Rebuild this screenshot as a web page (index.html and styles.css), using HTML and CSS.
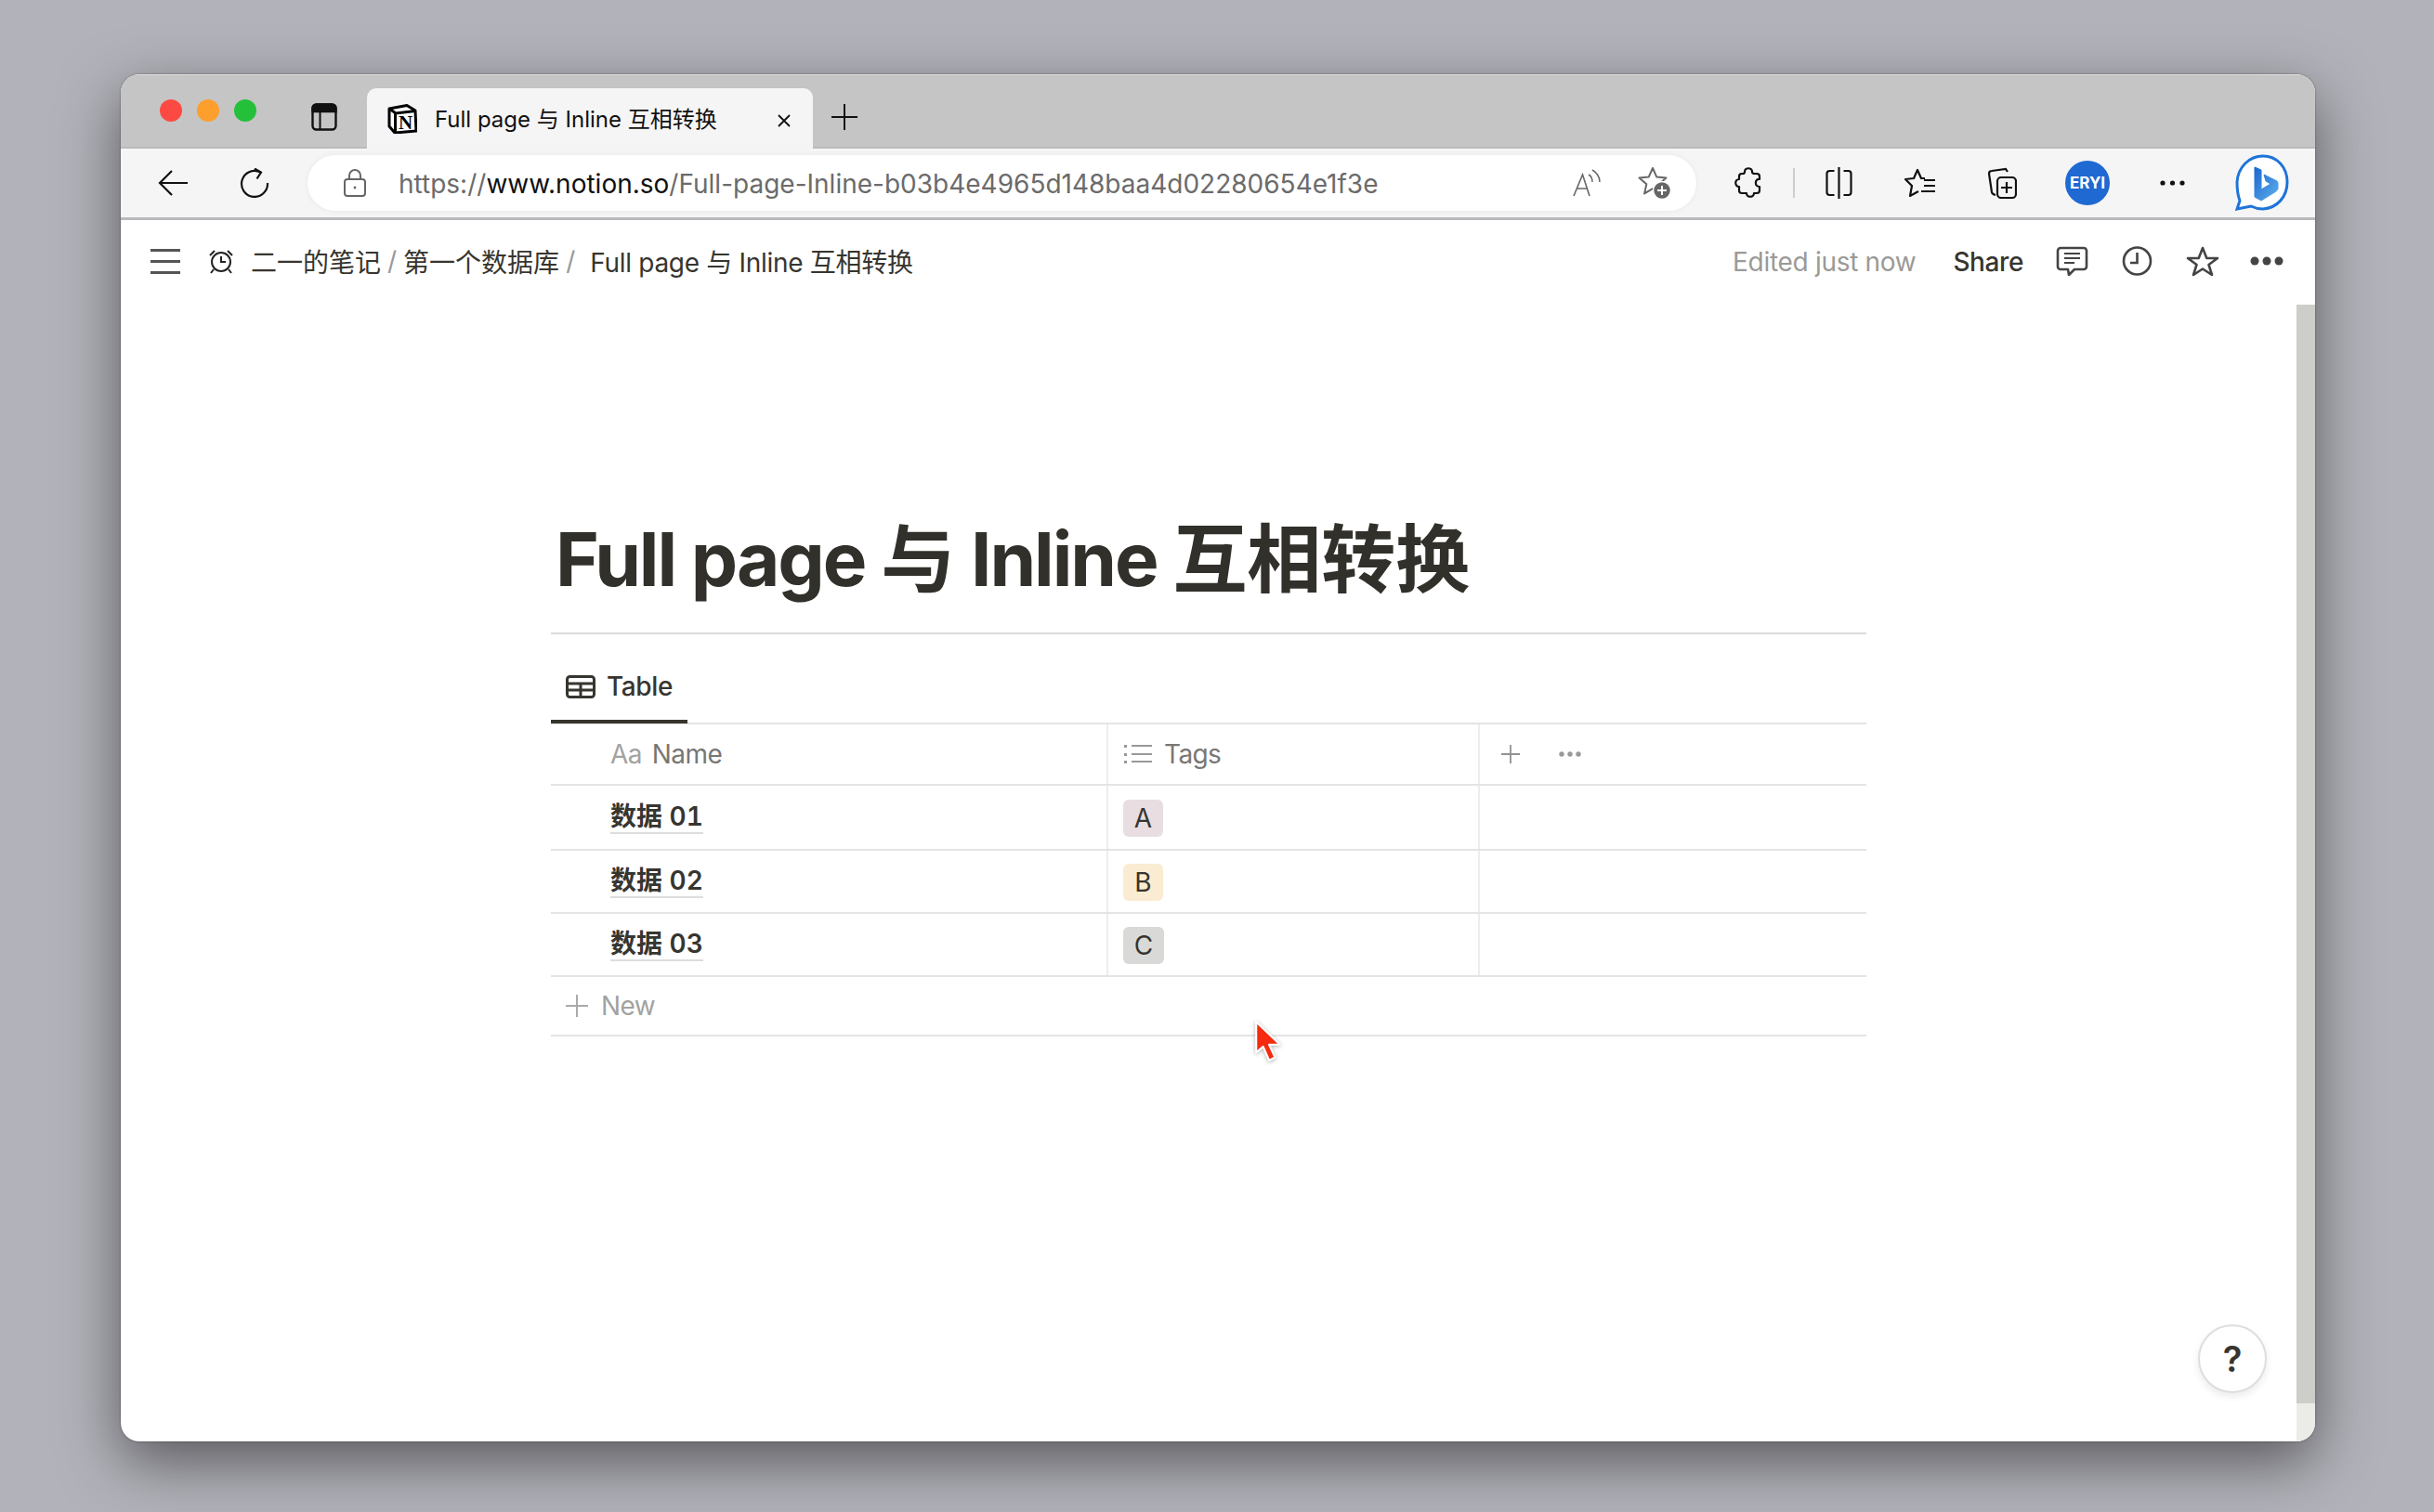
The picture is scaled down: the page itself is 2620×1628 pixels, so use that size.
FILE: index.html
```html
<!DOCTYPE html>
<html lang="zh-CN">
<head>
    <meta charset="UTF-8">
    <title>Full page 与 Inline 互相转换</title>
    <link rel="stylesheet" href="styles.css">
</head>
<body>
<div class="window">
    <!-- tab strip -->
    <div class="tabstrip">
        <div class="lights">
            <span class="light red"></span>
            <span class="light orange"></span>
            <span class="light green"></span>
        </div>
        <svg class="tabs-icon" viewBox="0 0 28 30" fill="none" stroke="#111" stroke-width="2.4">
            <rect x="1.5" y="1.5" width="25" height="27" rx="4"/>
            <path d="M1.5 9V5.5a4 4 0 0 1 4-4h17a4 4 0 0 1 4 4V9z" fill="#111"/>
            <path d="M9.5 9v19.5" stroke-width="2"/>
        </svg>
        <div class="tab">
            <svg class="notion-logo" viewBox="0 0 32 32">
                <path d="M2 5 21 1.5 30 7 31 29 8 31 2 24z" fill="#fff" stroke="#000" stroke-width="3" stroke-linejoin="round"/>
                <path d="M2 5 9 10 30 7.5M8.5 10 8.5 30" fill="none" stroke="#000" stroke-width="3"/>
                <text x="19.5" y="26.5" text-anchor="middle" class="notion-n">N</text>
            </svg>
            <span class="tab-title">Full page 与 Inline 互相转换</span>
            <svg class="tab-close" viewBox="0 0 16 16" stroke="#111" stroke-width="1.8"><path d="M2 2l12 12M14 2 2 14"/></svg>
        </div>
        <svg class="new-tab" viewBox="0 0 28 28" stroke="#111" stroke-width="2"><path d="M14 0v28M0 14h28"/></svg>
    </div>

    <!-- address bar -->
    <div class="toolbar">
        <svg class="tb-back" viewBox="0 0 32 28" fill="none" stroke="#111" stroke-width="2.2"><path d="M32 14H2M15 1 2 14l13 13"/></svg>
        <svg class="tb-reload" viewBox="0 0 32 32" fill="none" stroke="#111" stroke-width="2.2"><path d="M22.5 4.5A14 14 0 1 0 30 16"/><path d="M16 .5l7 4.2-4.5 6.800"/></svg>
        <div class="addressbar">
            <svg class="lock" viewBox="0 0 24 30" fill="none" stroke="#666" stroke-width="2"><rect x="1" y="11" width="22" height="18" rx="3"/><path d="M6 11V7a6 6 0 0 1 12 0v4"/><circle cx="12" cy="20" r="1.4" fill="#666" stroke="none"/></svg>
            <div class="url">https://<b>www.notion.so</b>/Full-page-Inline-b03b4e4965d148baa4d02280654e1f3e</div>
            <svg class="read-aloud" viewBox="0 0 31 30" fill="none" stroke="#666" stroke-width="1.6"><path d="M1 29 10.5 6 18 29M4.5 21h11"/><path d="M17 6c2 1 4 4 4 8M21 1c4 2 8 7 8 13" stroke-width="1.5"/></svg>
            <svg class="fav-add" viewBox="0 0 36 36" fill="none" stroke="#666" stroke-width="2"><path d="M16 2l4.2 9.400 10.300 1-7.800 6.900 2.200 10.100L16 24.200l-8.900 5.200 2.200-10.100-7.800-6.900 10.300-1z" stroke-linejoin="round"/><circle cx="26" cy="26" r="9.5" fill="#666" stroke="#fff" stroke-width="1.5"/><path d="M26 21v10M21 26h10" stroke="#fff" stroke-width="2"/></svg>
        </div>
        <svg class="ic-ext" viewBox="0 0 28 34" fill="none" stroke="#111" stroke-width="2.2"><path d="M10 5c0-5 8-5 8 0 0 1 1 2 3 2h2a3 3 0 0 1 3 3v3c-5-1-6 8 0 8v4a3 3 0 0 1-3 3h-3c0 5-8 5-8 0H7a3 3 0 0 1-3-3v-4c-5 0-5-8 0-8v-3a3 3 0 0 1 3-3h1c1 0 2-1 2-2z" stroke-linejoin="round"/></svg>
        <span class="tb-sep"></span>
        <svg class="ic-split" viewBox="0 0 30 34" fill="none" stroke="#111" stroke-width="2.2"><path d="M10 4H5a3 3 0 0 0-3 3v20a3 3 0 0 0 3 3h5M20 4h5a3 3 0 0 1 3 3v20a3 3 0 0 1-3 3h-5"/><path d="M15 0v34"/></svg>
        <svg class="ic-favs" viewBox="0 0 33 32" fill="none" stroke="#111" stroke-width="2.2"><path d="M22 11h-4L14 2l-4 9-9 1 7 7-2 11 9-5" stroke-linejoin="round"/><path d="M21 13h12M21 19h12M18 25h15" stroke-width="2"/></svg>
        <svg class="ic-coll" viewBox="0 0 32 34" fill="none" stroke="#111" stroke-width="2.2"><path d="M22 5 20 2 5 4a3 3 0 0 0-3 3l3 20c.3 1.5 2 2.5 4 3"/><rect x="11" y="11" width="20" height="22" rx="4"/><path d="M21 16v12M15 22h12"/></svg>
        <div class="avatar">ERYI</div>
        <svg class="ic-more" viewBox="0 0 27 6" fill="#111"><circle cx="3" cy="3" r="2.6"/><circle cx="13.5" cy="3" r="2.6"/><circle cx="24" cy="3" r="2.6"/></svg>
        <svg class="ic-bing" viewBox="0 0 60 62">
            <defs>
                <linearGradient id="bing-fill" x1="0" y1="0" x2="1" y2="1">
                    <stop offset="0" stop-color="#1c66cf"/>
                    <stop offset="1" stop-color="#5fb0ec"/>
                </linearGradient>
            </defs>
            <path d="M31 2C16 2 4 14 3 30c0 8 1 15 3 20l-3 9 15-3c4 2 8 3 13 3 15-1 26-13 26-29S46 2 31 2z" fill="#fff" stroke="#1f74d8" stroke-width="3"/>
            <path d="M22 14l7 3v21l10-6-5-3-2-7 14 7c1 1 1 2 1 3v5c0 1-1 2-2 3l-16 10-7-4z" fill="url(#bing-fill)" stroke="url(#bing-fill)" stroke-linejoin="round"/>
        </svg>
    </div>

    <div class="viewport">
        <div class="page">
            <div class="topbar">
                <svg class="ic-menu" viewBox="0 0 32 27" fill="#555"><rect width="32" height="3"/><rect y="12" width="32" height="3"/><rect y="24" width="32" height="3"/></svg>
                <svg class="ic-alarm" viewBox="0 0 28 28" fill="none" stroke="#222" stroke-width="2"><circle cx="14" cy="15" r="10"/><path d="M14 9v6h5M2 8l5-5M26 8l-5-5M6 23l-3 4M22 23l3 4"/></svg>
                <span class="crumb">二一的笔记</span>
                <span class="slash">/</span>
                <span class="crumb">第一个数据库</span>
                <span class="slash">/</span>
                <span class="crumb crumb-current">Full page 与 Inline 互相转换</span>
                <span class="edited">Edited just now</span>
                <span class="share">Share</span>
                <svg class="ic-comment" viewBox="0 0 35 32" fill="none" stroke="#444" stroke-width="2.6"><path d="M5 2h25a3 3 0 0 1 3 3v17a3 3 0 0 1-3 3H20l-6 6-1-6H5a3 3 0 0 1-3-3V5a3 3 0 0 1 3-3z" stroke-linejoin="round"/><path d="M9 8h17M9 13h17M9 18h11" stroke-width="2"/></svg>
                <svg class="ic-clock" viewBox="0 0 33 32" fill="none" stroke="#444" stroke-width="2.6"><circle cx="16.5" cy="16" r="14.5"/><path d="M16.5 7v11H9"/></svg>
                <svg class="ic-star" viewBox="0 0 36 33" fill="none" stroke="#444" stroke-width="2.6"><path d="M18 2l4.300 11H34l-9.500 7L28 31l-10-6.500L8 31l3.500-11L2 13h11.700z" stroke-linejoin="round"/></svg>
                <svg class="ic-dots" viewBox="0 0 36 10" fill="#444"><circle cx="5" cy="5" r="4.5"/><circle cx="18" cy="5" r="4.5"/><circle cx="31" cy="5" r="4.5"/></svg>
            </div>

            <div class="content">
                <h1 class="title"><span class="lat">Full page </span>与<span class="lat"> Inline </span>互相转换</h1>
                <div class="views">
                    <div class="view-tab">
                        <svg class="ic-table" viewBox="0 0 32 25" fill="none" stroke="#37352f" stroke-width="3"><rect x="1.5" y="1.5" width="29" height="22" rx="3"/><path d="M1.5 9h29M1.5 16h29M16 9v15"/></svg>
                        <span>Table</span>
                    </div>
                </div>
                <div class="row head">
                    <div class="cell cell-name"><span class="aa">Aa</span> Name</div>
                    <div class="cell cell-tags">
                        <svg class="ic-list" viewBox="0 0 30 22" fill="#999"><rect x="0" y="1" width="3" height="3"/><rect x="0" y="10" width="3" height="3"/><rect x="0" y="18" width="3" height="3"/><rect x="8" y="1" width="22" height="2"/><rect x="8" y="10" width="22" height="2"/><rect x="8" y="18" width="22" height="2"/></svg>
                        <span>Tags</span>
                    </div>
                    <div class="cell cell-extra">
                        <svg class="ic-plus" viewBox="0 0 20 20" stroke="#919191" stroke-width="1.8"><path d="M10 0v20M0 10h20"/></svg>
                        <svg class="ic-dots-small" viewBox="0 0 24 6" fill="#999"><circle cx="3" cy="3" r="2.7"/><circle cx="12" cy="3" r="2.7"/><circle cx="21" cy="3" r="2.7"/></svg>
                    </div>
                </div>
                <div class="row first">
                    <div class="cell cell-name"><span class="rowname">数据 01</span></div>
                    <div class="cell cell-tags"><span class="tag tag-a">A</span></div>
                    <div class="cell"></div>
                </div>
                <div class="row">
                    <div class="cell cell-name"><span class="rowname">数据 02</span></div>
                    <div class="cell cell-tags"><span class="tag tag-b">B</span></div>
                    <div class="cell"></div>
                </div>
                <div class="row">
                    <div class="cell cell-name"><span class="rowname">数据 03</span></div>
                    <div class="cell cell-tags"><span class="tag tag-c">C</span></div>
                    <div class="cell"></div>
                </div>
                <div class="new-row">
                    <svg class="ic-new" viewBox="0 0 24 24" stroke="#aaa" stroke-width="2"><path d="M12 0v24M0 12h24"/></svg>
                    <span>New</span>
                </div>
            </div>

            <div class="help">?</div>
        </div>
        <div class="scrollbar"><div class="scroll-top"></div><div class="scroll-thumb"></div></div>
    </div>

    <svg class="cursor" viewBox="0 0 30 44">
        <path d="M3 2 3 33 10 27 16 41 22 38 16 25 27 25z" fill="#f52a0e" stroke="#fff" stroke-width="2" stroke-linejoin="round"/>
    </svg>
</div>
</body>
</html>
```

FILE: styles.css
```css
* { box-sizing: border-box; }
body { margin: 0; width: 2620px; height: 1628px; overflow: hidden; background-color: #b2b2ba; padding: 80px 128px 76px 130px; font-family: Inter, "Noto Sans CJK SC", sans-serif; color: #37352f; }
svg { display: block; flex: none; }

.window { position: relative; width: 2362px; height: 1472px; display: flex; flex-direction: column; border-radius: 20px; overflow: hidden; background-color: #fff; }
.window { box-shadow: 0 22px 64px rgba(0, 0, 0, .5), 0 0 2px rgba(0, 0, 0, .5); }

/* tab strip */
.tabstrip { height: 80px; flex: none; display: flex; align-items: flex-end; background-color: #c5c5c5; border-top: 1px solid #e2e2e2; border-bottom: 2px solid #bbb; }
.lights { display: flex; gap: 16px; margin: 0 0 27px 42px; }
.light { width: 24px; height: 24px; border-radius: 50%; }
.red { background-color: #fc4a43; }
.orange { background-color: #fc9f2c; }
.green { background-color: #25c03a; }
.tabs-icon { width: 28px; height: 30px; margin: 0 0 17px 59px; }
.tab { width: 480px; height: 65px; margin: 0 0 -2px 32px; padding: 0 23px 0 22px; display: flex; align-items: center; background-color: #f5f5f5; border-radius: 10px 10px 0 0; }
.notion-logo { width: 32px; height: 32px; }
.notion-n { font-family: "Liberation Serif", serif; font-weight: 700; font-size: 21px; fill: #000; }
.tab-title { margin: 0 0 2px 19px; font-size: 24px; color: #111; white-space: nowrap; }
.tab-close { width: 16px; height: 16px; margin-left: auto; margin-top: 4px; fill: none; }
.new-tab { width: 28px; height: 28px; margin: 0 0 18px 20px; }

/* address bar */
.toolbar { height: 77px; flex: none; display: flex; align-items: center; background-color: #f5f5f5; border-bottom: 3px solid #b9b9bd; }
.tb-back { width: 32px; height: 28px; margin-left: 40px; }
.tb-reload { width: 32px; height: 32px; margin-left: 56px; }
.addressbar { width: 1495px; height: 60px; margin-left: 41px; display: flex; align-items: center; background-color: #fff; border-radius: 30px; box-shadow: 0 0 6px rgba(0, 0, 0, .06); }
.lock { width: 24px; height: 30px; margin-left: 39px; }
.url { margin: 2px 0 0 35px; font-size: 28px; color: #6b6b6b; white-space: nowrap; }
.url b { font-weight: 400; color: #111; }
.read-aloud { width: 31px; height: 30px; margin-left: auto; }
.fav-add { width: 36px; height: 36px; margin: 0 27px 0 39px; }
.ic-ext { width: 30px; height: 34px; margin-left: 41px; }
.tb-sep { width: 2px; height: 32px; margin-left: 33px; background-color: #ccc; }
.ic-split { width: 31px; height: 34px; margin-left: 32px; }
.ic-favs { width: 33px; height: 32px; margin-left: 55px; }
.ic-coll { width: 32px; height: 34px; margin-left: 56px; }
.avatar { width: 48px; height: 48px; margin-left: 52px; border-radius: 50%; background-color: #1f69d3; color: #fff; font-size: 17px; font-weight: 700; line-height: 48px; text-align: center; }
.ic-more { width: 27px; height: 6px; margin-left: 54px; }
.ic-bing { width: 60px; height: 62px; margin-left: 53px; }

/* page */
.viewport { flex: 1; min-height: 0; display: flex; }
.page { position: relative; flex: 1; min-width: 0; }
.scrollbar { width: 20px; display: flex; flex-direction: column; background-color: #ebebe8; }
.scroll-top { height: 91px; background-color: #fff; }
.scroll-thumb { height: 1183px; background-color: #cdcdc9; }

.topbar { height: 88px; display: flex; align-items: center; padding: 0 14px 0 32px; }
.ic-menu { width: 32px; height: 27px; }
.ic-alarm { width: 28px; height: 28px; margin-left: 30px; }
.crumb { font-size: 28px; white-space: nowrap; color: #37352f; }
.ic-alarm + .crumb { margin-left: 18px; }
.slash { margin: 0 7px; font-size: 28px; color: #999; }
.crumb-current { margin-left: 9px; letter-spacing: -.3px; }
.edited { margin: 2px 0 0 auto; font-size: 28px; color: #9a9a97; letter-spacing: -.3px; }
.share { margin: 2px 0 0 40px; font-size: 28px; font-weight: 500; letter-spacing: -.4px; }
.ic-comment { width: 35px; height: 32px; margin-left: 35px; }
.ic-clock { width: 33px; height: 32px; margin-left: 36px; }
.ic-star { width: 36px; height: 33px; margin-left: 36px; }
.ic-dots { width: 36px; height: 10px; margin-left: 33px; }

.content { width: 1416px; margin-left: 463px; }
.title { height: 358px; margin: 0; padding: 225px 0 0 5px; font-size: 80px; font-weight: 700; line-height: 104px; color: #32302a; border-bottom: 2px solid #dadada; white-space: nowrap; }
.lat { letter-spacing: -2.1px; }
.views { height: 97px; display: flex; border-bottom: 2px solid #e4e4e4; }
.view-tab { width: 147px; height: 96px; display: flex; align-items: center; gap: 12px; padding: 20px 0 0 16px; font-size: 28px; font-weight: 500; letter-spacing: -.4px; border-bottom: 4px solid #37352f; }
.ic-table { width: 32px; height: 25px; }

.row { display: grid; grid-template-columns: 600px 400px 1fr; height: 68px; border-bottom: 2px solid #e4e4e4; }
.row.head { height: 66px; }
.row.first { height: 70px; }
.cell { display: flex; align-items: center; border-right: 2px solid #ededeb; }
.cell:last-child { border-right: none; }
.cell-name { padding-left: 64px; }
.cell-tags { padding: 2px 0 0 16px; }
.head .cell { font-size: 28px; color: #787774; letter-spacing: -.6px; }
.head .aa { color: #a3a29f; margin-right: 11px; }
.head .cell-tags { gap: 13px; padding: 0 0 0 17px; }
.ic-list { width: 30px; height: 22px; }
.cell-extra { padding-left: 23px; }
.ic-plus { width: 20px; height: 20px; }
.ic-dots-small { width: 24px; height: 6px; margin-left: 42px; }
.rowname { font-size: 28px; font-weight: 600; font-variant-numeric: tabular-nums; line-height: 34px; white-space: nowrap; border-bottom: 2px solid #ddd; }
.tag { display: block; width: 43px; height: 40px; border-radius: 6px; font-size: 28px; line-height: 40px; text-align: center; }
.tag-a { background-color: #e8dee2; }
.tag-b { background-color: #faecd2; }
.tag-c { width: 44px; background-color: #d9dad8; }

.new-row { height: 64px; display: flex; align-items: center; gap: 14px; padding-left: 16px; font-size: 28px; letter-spacing: -.6px; color: #a3a29f; border-bottom: 2px solid #e4e4e4; }
.ic-new { width: 24px; height: 24px; }

.help { position: absolute; right: 32px; bottom: 52px; width: 74px; height: 74px; border-radius: 50%; background-color: #fff; border: 2px solid #dedede; box-shadow: 0 4px 8px rgba(0, 0, 0, .08); font-size: 38px; font-weight: 600; line-height: 70px; text-align: center; }

.cursor { position: absolute; left: 1219px; top: 1018px; width: 32px; height: 47px; filter: drop-shadow(0 1px 2px rgba(0, 0, 0, .3)); }
```
